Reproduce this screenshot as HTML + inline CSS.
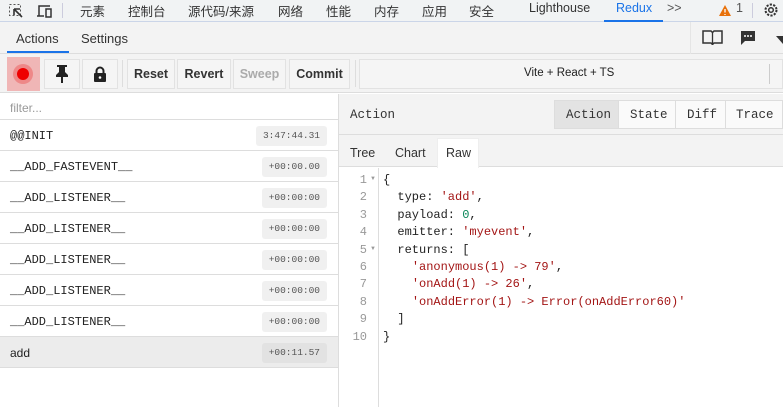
<!DOCTYPE html>
<html><head><style>
*{box-sizing:border-box;margin:0;padding:0}
body{width:783px;height:407px;overflow:hidden;background:#fff;font-family:"Liberation Sans","Noto Sans CJK SC",sans-serif;font-size:12px;color:#333;position:relative}
.abs{position:absolute}
.top{left:0;top:0;width:783px;height:22px;background:#f1f3f4;border-bottom:1px solid #cbd5e8}
.top span{position:absolute;top:1px;font-size:12.5px;color:#333}
.tabs{left:0;top:22px;width:783px;height:32px;background:#f3f3f3;border-bottom:1px solid #ddd}
.tb{left:0;top:54px;width:783px;height:39px;background:#f3f3f3;border-bottom:1px solid #ddd}
.btn{position:absolute;top:5px;height:30px;border:1px solid #e2e2e2;background:#f5f5f5;font-size:12.5px;font-weight:bold;color:#333;text-align:center;line-height:28px}
.left{left:0;top:94px;width:339px;height:313px;border-right:1px solid #ddd}
.row{position:absolute;left:0;width:338px;height:31px;border-bottom:1px solid #ddd;font-family:"Liberation Mono",monospace;font-size:12px;padding:9px 0 0 10px;color:#222}
.ts{position:absolute;right:11px;top:6px;height:20px;background:#f0f0f0;border-radius:3px;font-size:9.5px;color:#555;padding:4px 7px 0}
.mono{font-family:"Liberation Mono",monospace}
.code div{height:17.4px;line-height:17.4px}
.ln{position:absolute;left:338px;width:29px;text-align:right;color:#999;font-family:"Liberation Mono",monospace;font-size:12px}
.s{color:#a31515}
</style></head><body>
<div class="abs top">
<svg class="abs" style="left:8px;top:3px" width="16" height="16"><rect x="1.5" y="1.5" width="11" height="11" fill="none" stroke="#555" stroke-dasharray="2 2"/><path d="M6 6l8 8M6 6v6M6 6h6" stroke="#333" stroke-width="1.6" fill="none"/></svg>
<svg class="abs" style="left:36px;top:3px" width="18" height="16"><path d="M3 13V3h11" stroke="#333" stroke-width="1.5" fill="none"/><path d="M1 13h7" stroke="#333" stroke-width="1.5"/><rect x="10" y="6" width="5" height="8" fill="none" stroke="#333" stroke-width="1.5"/></svg>
<div class="abs" style="left:62px;top:3px;width:1px;height:15px;background:#ccd"></div>
<span style="left:80px">元素</span><span style="left:128px">控制台</span><span style="left:188px">源代码/来源</span><span style="left:278px">网络</span><span style="left:326px">性能</span><span style="left:374px">内存</span><span style="left:422px">应用</span><span style="left:469px">安全</span><span style="left:529px">Lighthouse</span><span style="left:616px;color:#1a73e8">Redux</span>
<div class="abs" style="left:604px;top:20px;width:59px;height:2px;background:#1a73e8"></div>
<span style="left:667px;color:#555">&gt;&gt;</span>
<svg class="abs" style="left:718px;top:4px" width="14" height="13"><path d="M7 1L13 12H1Z" fill="#e8710a"/><path d="M7 5v3.5M7 10v1" stroke="#fff" stroke-width="1.3"/></svg>
<span style="left:736px;color:#555">1</span>
<div class="abs" style="left:752px;top:3px;width:1px;height:15px;background:#ccd"></div>
<svg class="abs" style="left:763px;top:2px" width="16" height="16"><circle cx="8" cy="8" r="5.5" fill="none" stroke="#333" stroke-width="2" stroke-dasharray="2.2 1.3"/><circle cx="8" cy="8" r="2.3" fill="none" stroke="#333" stroke-width="1.5"/></svg>
</div>
<div class="abs tabs">
<span class="abs" style="left:16px;top:9px;font-size:13px">Actions</span>
<div class="abs" style="left:7px;top:29px;width:62px;height:2px;background:#1a73e8"></div>
<span class="abs" style="left:81px;top:9px;font-size:13px">Settings</span>
<div class="abs" style="left:690px;top:0;width:1px;height:32px;background:#e5e5e5"></div>
<svg class="abs" style="left:702px;top:8px" width="21" height="15"><path d="M1 1h8l1.5 1.5L12 1h8v12h-8l-1.5 1.5L9 13H1Z" fill="none" stroke="#333" stroke-width="1.5"/><path d="M10.5 2v12" stroke="#333" stroke-width="1.3"/></svg>
<svg class="abs" style="left:740px;top:8px" width="16" height="16"><path d="M1 1h14v10H5l-4 4Z" fill="#333"/><circle cx="5" cy="6" r="1" fill="#fff"/><circle cx="8" cy="6" r="1" fill="#fff"/><circle cx="11" cy="6" r="1" fill="#fff"/></svg>
<svg class="abs" style="left:776px;top:10px" width="7" height="12"><path d="M0 4l7 0 0 8Z" fill="#333"/></svg>
</div>
<div class="abs tb">
<div class="abs" style="left:7px;top:3px;width:33px;height:34px;background:#f0b6b6"></div>
<div class="abs" style="left:13px;top:10px;width:20px;height:20px;border-radius:50%;background:#e88"></div>
<div class="abs" style="left:17px;top:14px;width:12px;height:12px;border-radius:50%;background:#e00"></div>
<div class="btn" style="left:44px;width:36px"></div>
<svg class="abs" style="left:54px;top:64px;position:fixed" width="16" height="20"><path d="M3 1h10v2h-2v5l3 3v2H9v6H7v-6H2v-2l3-3V3H3Z" fill="#222"/></svg>
<div class="btn" style="left:82px;width:36px"></div>
<svg class="abs" style="position:fixed;left:93px;top:66px" width="14" height="17"><path d="M3.5 7V5a3.5 3.5 0 0 1 7 0v2" stroke="#222" stroke-width="2" fill="none"/><rect x="1" y="7" width="12" height="9" rx="1" fill="#222"/><circle cx="7" cy="11.5" r="1.3" fill="#fff"/></svg>
<div class="abs" style="left:122px;top:6px;width:1px;height:27px;background:#ddd"></div>
<div class="btn" style="left:127px;width:48px">Reset</div>
<div class="btn" style="left:177px;width:54px">Revert</div>
<div class="btn" style="left:233px;width:53px;color:#aaa">Sweep</div>
<div class="btn" style="left:289px;width:61px">Commit</div>
<div class="abs" style="left:355px;top:6px;width:1px;height:27px;background:#ddd"></div>
<div class="abs" style="left:359px;top:5px;width:424px;height:30px;border:1px solid #e2e2e2;background:#f5f5f5"></div>
<span class="abs" style="left:524px;top:13px;font-size:11.5px;color:#222">Vite + React + TS</span>
<div class="abs" style="left:769px;top:10px;width:1px;height:20px;background:#ccc"></div>
</div>
<div class="abs left">
<div class="abs" style="left:10px;top:7px;color:#999;font-size:12px">filter...</div>
<div class="abs" style="left:0;top:25px;width:338px;height:1px;background:#ddd"></div>
<div class="row" style="top:26px">@@INIT<span class="ts">3:47:44.31</span></div>
<div class="row" style="top:57px">__ADD_FASTEVENT__<span class="ts">+00:00.00</span></div>
<div class="row" style="top:88px">__ADD_LISTENER__<span class="ts">+00:00:00</span></div>
<div class="row" style="top:119px">__ADD_LISTENER__<span class="ts">+00:00:00</span></div>
<div class="row" style="top:150px">__ADD_LISTENER__<span class="ts">+00:00:00</span></div>
<div class="row" style="top:181px">__ADD_LISTENER__<span class="ts">+00:00:00</span></div>
<div class="row" style="top:212px">__ADD_LISTENER__<span class="ts">+00:00:00</span></div>
<div class="row" style="top:243px;background:#ececec;font-family:'Liberation Sans',sans-serif">add<span class="ts" style="background:#e2e2e2;font-family:'Liberation Mono',monospace">+00:11.57</span></div>
</div>
<div class="abs" style="left:339px;top:94px;width:444px;height:41px;background:#f3f3f3;border-bottom:1px solid #ddd"></div>
<span class="abs mono" style="left:350px;top:108px;font-size:12.5px">Action</span>
<div class="abs mono" style="left:554px;top:100px;width:229px;height:29px;border:1px solid #ddd;background:#fafafa;font-size:12.5px">
<div class="abs" style="left:0;top:0;width:64px;height:27px;background:#e3e3e3;border-right:1px solid #ddd"></div>
<span class="abs" style="left:11px;top:7px">Action</span>
<div class="abs" style="left:120px;top:0;width:1px;height:27px;background:#ddd"></div>
<span class="abs" style="left:75px;top:7px">State</span>
<div class="abs" style="left:170px;top:0;width:1px;height:27px;background:#ddd"></div>
<span class="abs" style="left:132px;top:7px">Diff</span>
<span class="abs" style="left:181px;top:7px">Trace</span>
</div>
<div class="abs" style="left:339px;top:135px;width:444px;height:32px;background:#f3f3f3;border-bottom:1px solid #ddd"></div>
<span class="abs" style="left:350px;top:146px;font-size:12.5px">Tree</span>
<span class="abs" style="left:395px;top:146px;font-size:12.5px">Chart</span>
<div class="abs" style="left:437px;top:138px;width:42px;height:30px;background:#fff;border:1px solid #eee;border-bottom:none"></div>
<span class="abs" style="left:446px;top:146px;font-size:12.5px">Raw</span>
<div class="abs" style="left:378px;top:168px;width:1px;height:239px;background:#ddd"></div>
<div class="ln code" style="top:172px"><div>1</div><div>2</div><div>3</div><div>4</div><div>5</div><div>6</div><div>7</div><div>8</div><div>9</div><div>10</div></div>
<span class="abs" style="left:370px;top:176px;font-size:6px;color:#999">▼</span>
<span class="abs" style="left:370px;top:246px;font-size:6px;color:#999">▼</span>
<div class="abs mono code" style="left:383px;top:172px;font-size:12px;color:#222;white-space:pre"><div>{</div><div>  type: <span class="s">'add'</span>,</div><div>  payload: <span style="color:#098658">0</span>,</div><div>  emitter: <span class="s">'myevent'</span>,</div><div>  returns: [</div><div>    <span class="s">'anonymous(1) -&gt; 79'</span>,</div><div>    <span class="s">'onAdd(1) -&gt; 26'</span>,</div><div>    <span class="s">'onAddError(1) -&gt; Error(onAddError60)'</span></div><div>  ]</div><div>}</div></div>
</body></html>
